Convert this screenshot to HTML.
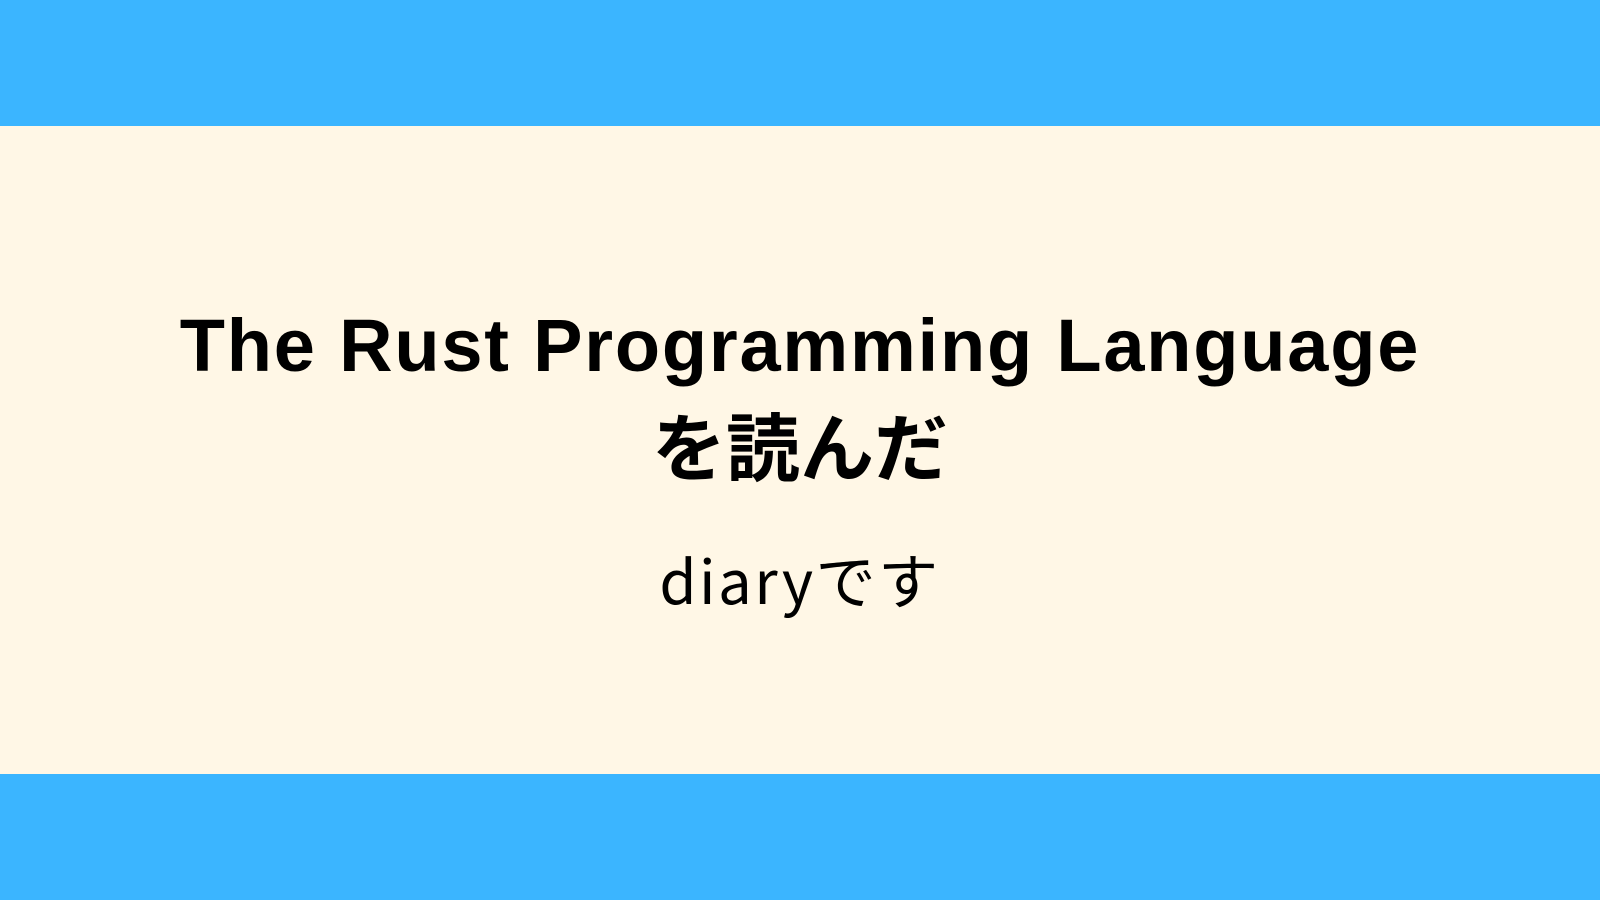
<!DOCTYPE html>
<html><head><meta charset="utf-8"><style>
html,body{margin:0;padding:0;}
body{width:1600px;height:900px;position:relative;overflow:hidden;background:#fff7e6;font-family:"Liberation Sans","Noto Sans CJK JP",sans-serif;color:#000;}
.band{position:absolute;left:0;width:1600px;background:#3bb5ff;}
.t{position:absolute;left:0;width:1600px;text-align:center;white-space:nowrap;line-height:1;}
</style></head><body>
<div class="band" style="top:0;height:126px"></div>
<div class="band" style="top:774px;height:126px"></div>
<div class="t" style="top:309px;font-size:74px;font-weight:bold;letter-spacing:1.8px">The Rust Programming Language</div>
<div class="t" style="top:413px;font-size:74px;font-weight:bold">を読んだ</div>
<div class="t" style="top:549px;font-size:60px;letter-spacing:2.5px;font-family:'Noto Sans CJK JP',sans-serif">diaryです</div>
</body></html>
